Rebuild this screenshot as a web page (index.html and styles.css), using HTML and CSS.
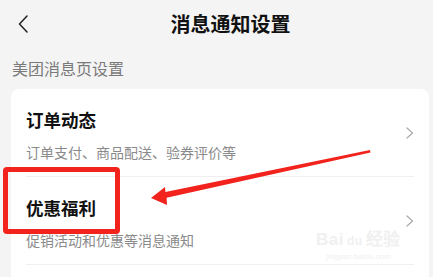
FILE: index.html
```html
<!DOCTYPE html>
<html lang="zh-CN">
<head>
<meta charset="utf-8">
<title>消息通知设置</title>
<link rel="stylesheet" href="styles.css">
</head>
<body>
<div class="page">
  <header class="nav">
    <div class="back">
      <svg width="10" height="18" viewBox="0 0 10 18"><path d="M9 1 L1.5 9 L9 17" fill="none" stroke="#222" stroke-width="1.5" stroke-linecap="round" stroke-linejoin="round"/></svg>
    </div>
    <h1 class="title">消息通知设置</h1>
  </header>
  <div class="section-label">美团消息页设置</div>
  <div class="card">
    <div class="item">
      <div class="item-text">
        <div class="item-title">订单动态</div>
        <div class="item-sub">订单支付、商品配送、验券评价等</div>
      </div>
      <svg class="chev" width="8" height="12" viewBox="0 0 8 12"><path d="M1 1 L6.5 6 L1 11" fill="none" stroke="#aaa" stroke-width="1.2" stroke-linecap="round" stroke-linejoin="round"/></svg>
    </div>
    <div class="item">
      <div class="item-text">
        <div class="item-title">优惠福利</div>
        <div class="item-sub">促销活动和优惠等消息通知</div>
      </div>
      <svg class="chev" width="8" height="12" viewBox="0 0 8 12"><path d="M1 1 L6.5 6 L1 11" fill="none" stroke="#aaa" stroke-width="1.2" stroke-linecap="round" stroke-linejoin="round"/></svg>
    </div>
  </div>
  <div class="watermark">
    <div class="wm-logo">Bai<span class="wm-du">du</span>经验</div>
    <div class="wm-url">jingyan.baidu.com</div>
  </div>
  <div class="highlight-box"></div>
  <svg class="arrow" width="433" height="277" viewBox="0 0 433 277">
    <polygon points="151,198 165,187 165.4,191.9 370,150 370.5,152.5 166.6,197.7 167,205" fill="#f2221c"/>
  </svg>
</div>
</body>
</html>
```
FILE: styles.css
```css
* { box-sizing: border-box; margin: 0; padding: 0; }
html, body {
  width: 433px;
  height: 277px;
  overflow: hidden;
  background: #f4f4f4;
  font-family: "Noto Sans CJK SC", "Noto Sans", sans-serif;
}
.page {
  position: relative;
  width: 433px;
  height: 277px;
  overflow: hidden;
}
.nav {
  display: flex;
  align-items: center;
  height: 48px;
}
.back {
  width: 28px;
  padding-left: 18px;
  display: flex;
  align-items: center;
}
.title {
  flex: 1;
  text-align: center;
  font-size: 20px;
  font-weight: 700;
  color: #111;
  line-height: 28px;
}
.section-label {
  margin-top: 9px;
  padding-left: 12px;
  font-size: 16px;
  line-height: 22px;
  color: #7a7a7a;
}
.card {
  margin: 10px 4px 0 11px;
  background: #fff;
  border-radius: 8px;
  padding: 0 15px 20px;
}
.item {
  display: flex;
  align-items: center;
  padding: 19px 0 14px;
  border-bottom: 1px solid #efefef;
}
.item-text {
  flex: 1;
  display: flex;
  flex-direction: column;
  gap: 10px;
}
.item-title {
  font-size: 17.5px;
  font-weight: 700;
  line-height: 24px;
  color: #111;
}
.item-sub {
  font-size: 14px;
  line-height: 20px;
  color: #8a8a8a;
}
.chev {
  margin-bottom: 4px;
}
.watermark {
  position: absolute;
  left: 316px;
  top: 230px;
  color: #f0f0f0;
  text-align: center;
}
.wm-logo {
  font-family: "Liberation Sans", sans-serif;
  font-size: 17px;
  font-weight: 700;
  line-height: 20px;
  letter-spacing: 0.5px;
}
.wm-du {
  font-size: 12px;
  margin: 0 3px;
}
.wm-url {
  font-family: "Liberation Sans", sans-serif;
  font-size: 8px;
  line-height: 12px;
}
.highlight-box {
  position: absolute;
  left: 3px;
  top: 167px;
  width: 117px;
  height: 67px;
  border: 5px solid #f2221c;
  border-radius: 4px;
}
.arrow {
  position: absolute;
  left: 0;
  top: 0;
}
```
